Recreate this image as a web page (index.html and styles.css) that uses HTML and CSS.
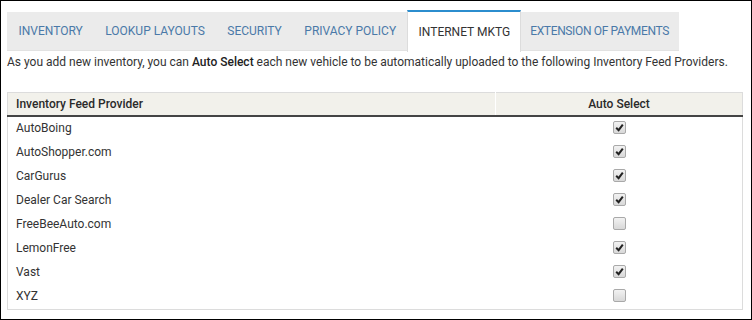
FILE: index.html
```html
<!DOCTYPE html>
<html>
<head>
<meta charset="utf-8">
<link rel="stylesheet" href="styles.css">
</head>
<body>
<div class="frame">
  <div class="tabs">
    <div class="tab">Inventory</div>
    <div class="tab">Lookup Layouts</div>
    <div class="tab">Security</div>
    <div class="tab">Privacy Policy</div>
    <div class="tab active">Internet Mktg</div>
    <div class="tab">Extension of Payments</div>
  </div>
  <p class="desc">As you add new inventory, you can <b>Auto Select</b> each new vehicle to be automatically uploaded to the following Inventory Feed Providers.</p>
  <table class="grid">
    <thead>
      <tr><th class="c1">Inventory Feed Provider</th><th class="c2">Auto Select</th></tr>
    </thead>
    <tbody>
      <tr><td>AutoBoing</td><td class="cb"><span class="box on"><svg viewBox="0 0 9 9"><path d="M1.2 4.8 L3.6 7.2 L7.8 1.6" /></svg></span></td></tr>
      <tr><td>AutoShopper.com</td><td class="cb"><span class="box on"><svg viewBox="0 0 9 9"><path d="M1.2 4.8 L3.6 7.2 L7.8 1.6" /></svg></span></td></tr>
      <tr><td>CarGurus</td><td class="cb"><span class="box on"><svg viewBox="0 0 9 9"><path d="M1.2 4.8 L3.6 7.2 L7.8 1.6" /></svg></span></td></tr>
      <tr><td>Dealer Car Search</td><td class="cb"><span class="box on"><svg viewBox="0 0 9 9"><path d="M1.2 4.8 L3.6 7.2 L7.8 1.6" /></svg></span></td></tr>
      <tr><td>FreeBeeAuto.com</td><td class="cb"><span class="box"></span></td></tr>
      <tr><td>LemonFree</td><td class="cb"><span class="box on"><svg viewBox="0 0 9 9"><path d="M1.2 4.8 L3.6 7.2 L7.8 1.6" /></svg></span></td></tr>
      <tr><td>Vast</td><td class="cb"><span class="box on"><svg viewBox="0 0 9 9"><path d="M1.2 4.8 L3.6 7.2 L7.8 1.6" /></svg></span></td></tr>
      <tr><td>XYZ</td><td class="cb"><span class="box"></span></td></tr>
    </tbody>
  </table>
</div>
</body>
</html>
```
FILE: styles.css
```css
html, body {
  margin: 0;
  padding: 0;
  background: #fff;
}
.frame {
  box-sizing: border-box;
  width: 752px;
  height: 320px;
  border: 1px solid #000;
  padding: 9px 9px 0 6px;
  font-family: Roboto, "Liberation Sans", sans-serif;
  font-size: 12px;
  color: #333;
}
.tabs {
  display: flex;
  align-items: flex-start;
  height: 42px;
}
.tab {
  box-sizing: border-box;
  margin-top: 2px;
  height: 39px;
  padding: 0 11px 0 11.5px;
  display: flex;
  align-items: center;
  background: #ebebeb;
  color: #4a79a8;
  text-transform: uppercase;
  font-size: 12px;
  border-bottom: 1px solid #e2e2e2;
}
.tab.active {
  margin-top: 0;
  height: 42px;
  background: #fff;
  color: #333;
  border-top: 2px solid #2b8dce;
  border-left: 1px solid #dcdcdc;
  border-right: 1px solid #dcdcdc;
  border-bottom: none;
  padding: 0 10px 1px 10.5px;
}
.tab:last-child {
  padding-left: 9px;
  padding-right: 10px;
  letter-spacing: -0.35px;
}
.desc {
  margin: 0;
  line-height: 20px;
  height: 20px;
}
.desc b {
  font-weight: 500;
  color: #222;
}
.grid {
  margin-top: 20px;
  width: 736px;
  border-collapse: collapse;
  border: 1px solid #dcdcdc;
}
.grid th {
  background: #f2f1eb;
  height: 22px;
  padding: 0 8px;
  font-weight: 500;
  color: #2a2a2a;
  border-bottom: 2px solid #444;
}
.grid th.c1 {
  text-align: left;
  width: 471px;
  border-right: 1px solid #fff;
}
.grid th.c2 {
  text-align: center;
}
.grid td {
  height: 24px;
  padding: 0 8px;
  vertical-align: middle;
}
.grid td.cb {
  text-align: center;
}
.box {
  display: inline-block;
  vertical-align: middle;
  box-sizing: border-box;
  width: 13px;
  height: 13px;
  border: 1px solid #a9a9a9;
  border-radius: 2px;
  background: linear-gradient(#f2f2f2, #d8d8d8);
  position: relative;
  top: -2px;
  margin-left: 1px;
}
.box svg {
  display: block;
  width: 9px;
  height: 9px;
  margin: 1px 0 0 1px;
}
.box svg path {
  fill: none;
  stroke: #222;
  stroke-width: 2;
}
.grid td:first-child {
  position: relative;
  top: -1px;
}
```
